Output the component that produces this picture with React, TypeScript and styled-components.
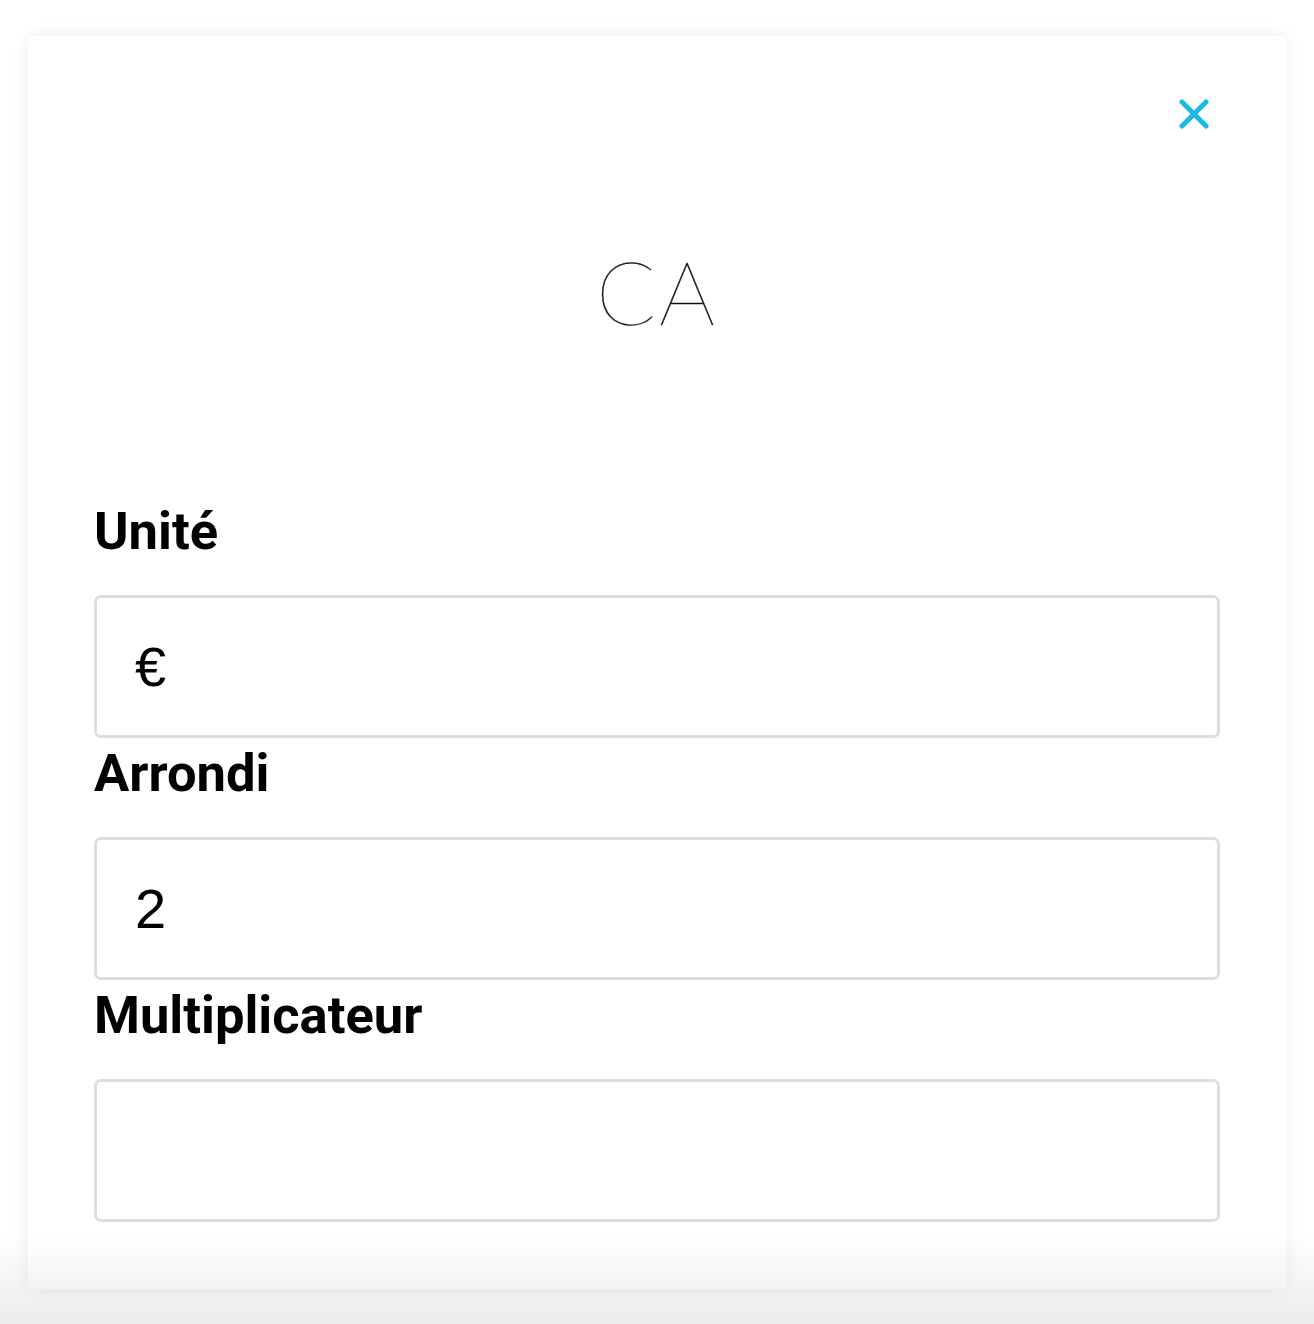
import styled, { createGlobalStyle } from 'styled-components';

const GlobalStyle = createGlobalStyle`
  html, body {
    margin: 0;
    padding: 0;
    background: #ffffff;
    font-family: Roboto, "Liberation Sans", sans-serif;
  }
  * {
    box-sizing: border-box;
  }
`;

const Page = styled.div`
  min-height: 1324px;
  padding: 36px 28px 0;
`;

const Card = styled.div`
  background: #fff;
  border-radius: 4px;
  box-shadow: 0 0 18px rgba(0, 0, 0, 0.07);
  padding: 52px 66px 67px;
`;

const CloseRow = styled.div`
  display: flex;
  justify-content: flex-end;
`;

const CloseButton = styled.button`
  width: 52px;
  height: 52px;
  padding: 0;
  border: none;
  background: transparent;
  display: flex;
  align-items: center;
  justify-content: center;
  cursor: pointer;
`;

const Title = styled.h1`
  margin: 99px 0 0;
  text-align: center;
  font-family: Lato, "Noto Sans", sans-serif;
  font-weight: 100;
  font-size: 88px;
  line-height: 1.2;
  color: #111;
  letter-spacing: 3px;
  -webkit-text-stroke: 0.4px #111;
`;

const Form = styled.form`
  margin-top: 155px;
  display: flex;
  flex-direction: column;
`;

const Field = styled.div<{ $first?: boolean }>`
  display: flex;
  flex-direction: column;
  margin-top: ${(p) => (p.$first ? '0' : '4px')};
`;

const Label = styled.label`
  font-family: Roboto, "Liberation Sans", sans-serif;
  font-weight: 700;
  font-size: 52.5px;
  line-height: 62px;
  color: #000;
  margin-bottom: 33px;
`;

const Input = styled.input`
  width: 100%;
  height: 143px;
  border: 3px solid #dedede;
  border-radius: 7px;
  padding: 0 38px;
  font-family: "Liberation Sans", Arial, sans-serif;
  font-size: 56px;
  color: #000;
  background: #fff;
  outline: none;
`;

const BottomFade = styled.div`
  position: fixed;
  left: 0;
  right: 0;
  bottom: 0;
  height: 90px;
  pointer-events: none;
  background: linear-gradient(rgba(0, 0, 0, 0), rgba(0, 0, 0, 0.075));
`;

function CloseIcon() {
  return (
    <svg width="30" height="30" viewBox="0 0 30 30">
      <path
        d="M3 3 L27 27 M27 3 L3 27"
        stroke="#1bb8e8"
        strokeWidth="5"
        strokeLinecap="round"
      />
    </svg>
  );
}

const fields = [
  { id: 'unite', label: 'Unité', value: '€' },
  { id: 'arrondi', label: 'Arrondi', value: '2' },
  { id: 'multiplicateur', label: 'Multiplicateur', value: '' },
];

function App() {
  return (
    <>
      <GlobalStyle />
      <Page>
        <Card>
          <CloseRow>
            <CloseButton type="button" aria-label="Fermer">
              <CloseIcon />
            </CloseButton>
          </CloseRow>
          <Title>CA</Title>
          <Form onSubmit={(e) => e.preventDefault()}>
            {fields.map((f, i) => (
              <Field key={f.id} $first={i === 0}>
                <Label htmlFor={f.id}>{f.label}</Label>
                <Input id={f.id} defaultValue={f.value} />
              </Field>
            ))}
          </Form>
        </Card>
      </Page>
      <BottomFade />
    </>
  );
}

export default App;
